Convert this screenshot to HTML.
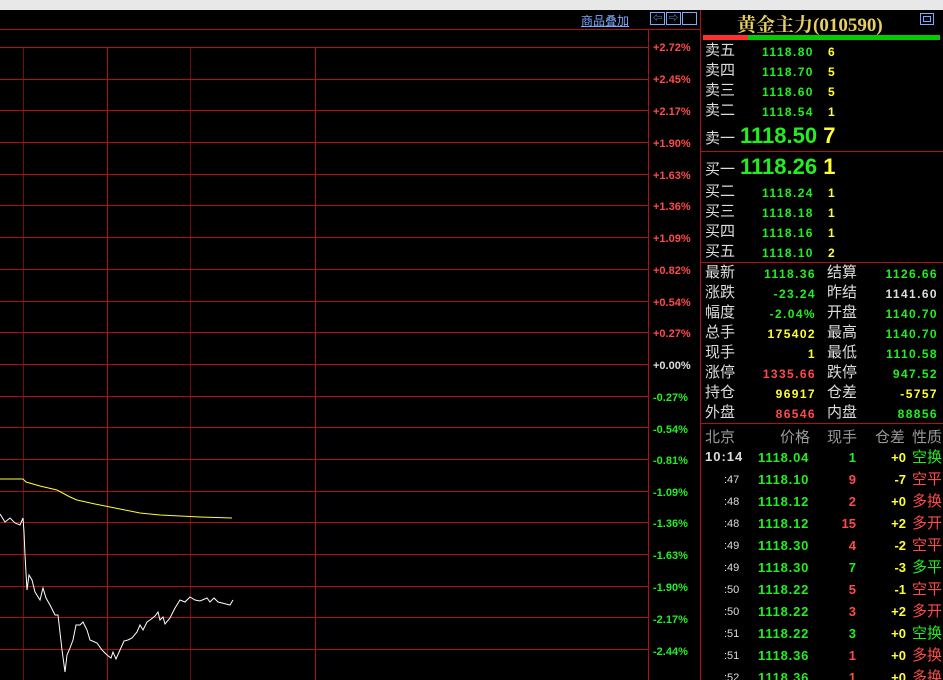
<!DOCTYPE html>
<html><head><meta charset="utf-8"><style>
*{margin:0;padding:0;box-sizing:border-box}
html,body{width:943px;height:680px;overflow:hidden}
body{background:#000;position:relative;font-family:"Liberation Sans","Noto Sans CJK SC",sans-serif}
.a{position:absolute;white-space:nowrap}
.h{position:absolute;height:1px;background:#b01010}
.v{position:absolute;width:1px;background:#b01010}
.lab{position:absolute;left:653px;font-size:11px;font-weight:bold}
.r{color:#ff4a4a}.g{color:#22ee22}.w{color:#ddd}.y{color:#ffff33}.gr{color:#999}
.cn{font-size:15px;color:#ddd}
.num{font-size:12px;font-weight:bold;letter-spacing:1.4px}
</style></head><body>
<div class="a" style="left:0;top:0;width:943px;height:10px;background:#e8e8e8"></div>
<div class="h" style="left:0;top:29px;width:700px"></div>
<div class="v" style="left:648px;top:29px;height:651px"></div>
<div class="v" style="left:700px;top:10px;height:670px"></div>
<div class="v" style="left:107px;top:47px;height:633px"></div>
<div class="v" style="left:315px;top:47px;height:633px"></div>
<div class="v" style="left:23px;top:47px;height:633px;background:#700c0c"></div>
<div class="v" style="left:190px;top:47px;height:633px;background:#700c0c"></div>
<div class="a" style="left:581px;top:12px;font-size:12px;color:#7fa8ff;text-decoration:underline">商品叠加</div>
<div class="a" style="left:650px;top:12px;width:50px;height:13px;">
<div class="a" style="left:0;top:0;width:15px;height:13px;border:1px solid #7fa8ff;color:#7fa8ff;font-size:9px;line-height:11px;text-align:center">⇦</div>
<div class="a" style="left:16px;top:0;width:15px;height:13px;border:1px solid #7fa8ff;color:#7fa8ff;font-size:9px;line-height:11px;text-align:center">⇨</div>
<div class="a" style="left:32px;top:0;width:15px;height:13px;border:1px solid #7fa8ff;"></div></div>
<svg class="a" style="left:0;top:0" width="648" height="680">
<g fill="#b01010">
<rect x="0" y="47" width="648" height="1"/><rect x="0" y="79" width="648" height="1"/><rect x="0" y="110" width="648" height="1"/><rect x="0" y="142" width="648" height="1"/><rect x="0" y="174" width="648" height="1"/><rect x="0" y="205" width="648" height="1"/><rect x="0" y="237" width="648" height="1"/><rect x="0" y="269" width="648" height="1"/><rect x="0" y="301" width="648" height="1"/><rect x="0" y="332" width="648" height="1"/><rect x="0" y="364" width="648" height="1"/><rect x="0" y="396" width="648" height="1"/><rect x="0" y="427" width="648" height="1"/><rect x="0" y="459" width="648" height="1"/><rect x="0" y="491" width="648" height="1"/><rect x="0" y="522" width="648" height="1"/><rect x="0" y="554" width="648" height="1"/><rect x="0" y="586" width="648" height="1"/><rect x="0" y="617" width="648" height="1"/><rect x="0" y="649" width="648" height="1"/>
</g>
<polyline fill="none" stroke="#ffff33" stroke-width="1" points="0,479 23,479 26,482 40,486 57,490 70,497 77,500 95,504 110,507 140,513 160,515 180,516 200,517 232,518"/>
<polyline fill="none" stroke="#fff" stroke-width="1" points="0,514 5,522 10,518 15,523 20,525 23,518 24,532 25,555 27,590 29,575 32,580 35,592 40,600 43,588 46,598 50,605 55,615 58,615 62,650 65,672 67,655 70,648 73,640 76,625 80,625 83,622 87,630 90,640 97,643 102,650 107,655 111,658 113,652 116,659 120,650 124,641 128,640 132,638 137,632 140,625 143,630 147,622 150,620 155,616 158,612 160,620 163,617 165,624 170,618 175,608 180,600 185,602 190,597 195,600 200,601 207,598 210,602 214,598 218,602 222,603 230,605 233,600"/>
</svg>
<div class="lab r" style="top:42px">+2.72%</div>
<div class="lab r" style="top:74px">+2.45%</div>
<div class="lab r" style="top:106px">+2.17%</div>
<div class="lab r" style="top:138px">+1.90%</div>
<div class="lab r" style="top:170px">+1.63%</div>
<div class="lab r" style="top:201px">+1.36%</div>
<div class="lab r" style="top:233px">+1.09%</div>
<div class="lab r" style="top:265px">+0.82%</div>
<div class="lab r" style="top:297px">+0.54%</div>
<div class="lab r" style="top:328px">+0.27%</div>
<div class="lab w" style="top:360px">+0.00%</div>
<div class="lab g" style="top:392px">-0.27%</div>
<div class="lab g" style="top:424px">-0.54%</div>
<div class="lab g" style="top:455px">-0.81%</div>
<div class="lab g" style="top:487px">-1.09%</div>
<div class="lab g" style="top:518px">-1.36%</div>
<div class="lab g" style="top:550px">-1.63%</div>
<div class="lab g" style="top:582px">-1.90%</div>
<div class="lab g" style="top:614px">-2.17%</div>
<div class="lab g" style="top:646px">-2.44%</div>

<div class="a" style="left:737px;top:10px;font-size:19px;font-weight:bold;color:#e8d060;font-family:'Liberation Serif','Noto Serif CJK SC',serif">黄金主力(010590)</div>
<div class="a" style="left:920px;top:13px;width:14px;height:12px;border:1px solid #7fa8ff"><div style="margin:2px;height:6px;border:1px solid #7fa8ff"></div></div>
<div class="a" style="left:703px;top:35px;width:45px;height:5px;background:#ff3030"></div>
<div class="a" style="left:748px;top:35px;width:192px;height:5px;background:#00cc00"></div>
<div class="h" style="left:701px;top:151px;width:242px"></div>
<div class="h" style="left:701px;top:262px;width:242px"></div>
<div class="h" style="left:701px;top:423px;width:242px"></div>

<div class="a cn" style="left:705px;top:41px;line-height:20px">卖五<br>卖四<br>卖三<br>卖二</div>
<div class="a num g" style="left:762px;top:42px;line-height:20px">1118.80<br>1118.70<br>1118.60<br>1118.54</div>
<div class="a num y" style="left:828px;top:42px;line-height:20px">6<br>5<br>5<br>1</div>
<div class="a cn" style="left:705px;top:127px">卖一</div>
<div class="a g" style="left:740px;top:123px;font-size:22px;font-weight:bold">1118.50 <span class="y">7</span></div>
<div class="a cn" style="left:705px;top:158px">买一</div>
<div class="a g" style="left:740px;top:154px;font-size:22px;font-weight:bold">1118.26 <span class="y">1</span></div>
<div class="a cn" style="left:705px;top:182px;line-height:20px">买二<br>买三<br>买四<br>买五</div>
<div class="a num g" style="left:762px;top:183px;line-height:20px">1118.24<br>1118.18<br>1118.16<br>1118.10</div>
<div class="a num y" style="left:828px;top:183px;line-height:20px">1<br>1<br>1<br>2</div>

<div class="a cn" style="left:705px;top:263px;line-height:20px">最新<br>涨跌<br>幅度<br>总手<br>现手<br>涨停<br>持仓<br>外盘</div>
<div class="a num" style="left:730px;top:264px;width:86px;text-align:right;line-height:20px"><span class="g">1118.36</span><br><span class="g">-23.24</span><br><span class="g">-2.04%</span><br><span class="y">175402</span><br><span class="y">1</span><br><span class="r">1335.66</span><br><span class="y">96917</span><br><span class="r">86546</span></div>
<div class="a cn" style="left:827px;top:263px;line-height:20px">结算<br>昨结<br>开盘<br>最高<br>最低<br>跌停<br>仓差<br>内盘</div>
<div class="a num" style="left:850px;top:264px;width:88px;text-align:right;line-height:20px"><span class="g">1126.66</span><br><span class="w">1141.60</span><br><span class="g">1140.70</span><br><span class="g">1140.70</span><br><span class="g">1110.58</span><br><span class="g">947.52</span><br><span class="y">-5757</span><br><span class="g">88856</span></div>

<div class="a gr" style="left:705px;top:426px;font-size:15px">北京</div>
<div class="a gr" style="left:780px;top:426px;font-size:15px">价格</div>
<div class="a gr" style="left:827px;top:426px;font-size:15px">现手</div>
<div class="a gr" style="left:875px;top:426px;font-size:15px">仓差</div>
<div class="a gr" style="left:912px;top:426px;font-size:15px">性质</div>
<div class="a w" style="left:705px;top:449px;font-size:13px;font-weight:bold;letter-spacing:1px">10:14</div>
<div class="a" style="left:700px;top:447px;width:243px;height:233px;font-size:13px;line-height:22px;overflow:hidden">
<div class="a w" style="left:24px;top:22px;font-size:11px;line-height:22px">:47<br>:48<br>:48<br>:49<br>:49<br>:50<br>:50<br>:51<br>:51<br>:52</div>
<div class="a g" style="left:58px;top:0;font-weight:bold;letter-spacing:0.8px">1118.04<br>1118.10<br>1118.12<br>1118.12<br>1118.30<br>1118.30<br>1118.22<br>1118.22<br>1118.22<br>1118.36<br>1118.36</div>
<div class="a" style="left:120px;top:0;width:36px;text-align:right;font-weight:bold"><span class="g">1</span><br><span class="r">9</span><br><span class="r">2</span><br><span class="r">15</span><br><span class="r">4</span><br><span class="g">7</span><br><span class="r">5</span><br><span class="r">3</span><br><span class="g">3</span><br><span class="r">1</span><br><span class="r">1</span></div>
<div class="a y" style="left:170px;top:0;width:36px;text-align:right;font-weight:bold">+0<br>-7<br>+0<br>+2<br>-2<br>-3<br>-1<br>+2<br>+0<br>+0<br>+0</div>
<div class="a" style="left:212px;top:0;font-size:15px"><span class="g">空换</span><br><span class="r">空平</span><br><span class="r">多换</span><br><span class="r">多开</span><br><span class="r">空平</span><br><span class="g">多平</span><br><span class="r">空平</span><br><span class="r">多开</span><br><span class="g">空换</span><br><span class="r">多换</span><br><span class="r">多换</span></div>
</div>
</body></html>
